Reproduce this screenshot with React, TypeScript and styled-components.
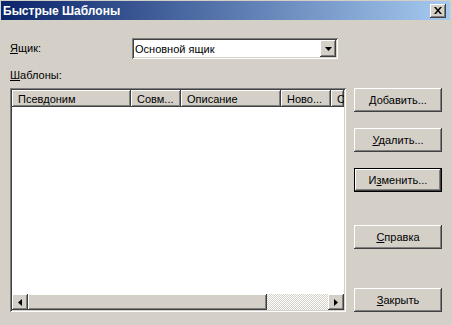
import React from "react";
import styled, { createGlobalStyle } from "styled-components";

const GlobalStyle = createGlobalStyle`
  html, body {
    margin: 0;
    padding: 0;
    background: #d4d0c8;
  }
  body {
    font-family: "Liberation Sans", Arial, sans-serif;
    font-size: 11px;
    color: #000;
  }
`;

const Window = styled.div`
  box-sizing: border-box;
  width: 452px;
  height: 325px;
  background: #d4d0c8;
  padding: 1px 2px 0 1px;
  display: flex;
  flex-direction: column;
`;

const TitleBar = styled.div`
  height: 19px;
  display: flex;
  align-items: center;
  justify-content: space-between;
  padding: 0 4px 0 2px;
  background: linear-gradient(to right, #0a246a, #a6caf0);
`;

const Title = styled.span`
  color: #fff;
  font-weight: bold;
  font-size: 12px;
`;

const CloseButton = styled.div`
  box-sizing: border-box;
  width: 16px;
  height: 14px;
  background: #d4d0c8;
  display: flex;
  align-items: center;
  justify-content: center;
  box-shadow: inset -1px -1px #404040, inset 1px 1px #fff,
    inset -2px -2px #808080;
`;

const Body = styled.div`
  display: flex;
  padding: 18px 0 0 9px;
`;

const LeftColumn = styled.div`
  width: 336px;
  display: flex;
  flex-direction: column;
`;

const FieldRow = styled.div`
  display: flex;
  align-items: center;
  height: 21px;
`;

const Label = styled.span<{ width?: number }>`
  width: ${({ width }) => (width ? `${width}px` : "auto")};
  line-height: 13px;
`;

const U = styled.span`
  text-decoration: underline;
`;

const Sunken = styled.div`
  box-sizing: border-box;
  background: #fff;
  box-shadow: inset 1px 1px #808080, inset -1px -1px #fff,
    inset 2px 2px #404040, inset -2px -2px #d4d0c8;
  padding: 2px;
`;

const Combo = styled(Sunken)`
  width: 206px;
  height: 21px;
  display: flex;
  align-items: center;
`;

const ComboText = styled.span`
  flex: 1;
  padding-left: 1px;
`;

const Raised = styled.div`
  box-sizing: border-box;
  background: #d4d0c8;
  box-shadow: inset -1px -1px #404040, inset 1px 1px #fff,
    inset -2px -2px #808080;
  display: flex;
  align-items: center;
  justify-content: center;
`;

const ComboButton = styled(Raised)`
  width: 16px;
  height: 17px;
`;

const SectionLabel = styled.div`
  margin-top: 10px;
  height: 19px;
  line-height: 13px;
`;

const List = styled(Sunken)`
  width: 336px;
  height: 224px;
  display: flex;
  flex-direction: column;
`;

const HeaderRow = styled.div`
  display: flex;
  height: 17px;
  overflow: hidden;
  flex-shrink: 0;
`;

const HeaderCell = styled(Raised)<{ width?: number }>`
  width: ${({ width }) => (width ? `${width}px` : "auto")};
  flex: ${({ width }) => (width ? "none" : "1")};
  justify-content: flex-start;
  padding-left: 6px;
  white-space: nowrap;
  overflow: hidden;
`;

const ListBody = styled.div`
  flex: 1;
`;

const HScroll = styled.div`
  display: flex;
  height: 16px;
`;

const ScrollButton = styled(Raised)`
  width: 16px;
  height: 16px;
`;

const Thumb = styled(Raised)`
  width: 239px;
  height: 16px;
`;

const Track = styled.div`
  flex: 1;
  background-color: #d4d0c8;
  background-image: repeating-conic-gradient(#ffffff 0 25%, #d4d0c8 0 50%);
  background-size: 2px 2px;
`;

const RightColumn = styled.div`
  margin-left: 8px;
  display: flex;
  flex-direction: column;
`;

const Button = styled(Raised)<{ top: number; isDefault?: boolean }>`
  width: 88px;
  height: 24px;
  margin-top: ${({ top }) => top}px;
  box-shadow: ${({ isDefault }) =>
    isDefault
      ? "inset 0 0 0 1px #000, inset -2px -2px #404040, inset 2px 2px #fff, inset -3px -3px #808080"
      : "inset -1px -1px #404040, inset 1px 1px #fff, inset -2px -2px #808080"};
`;

const Arrow = ({ dir }: { dir: "down" | "left" | "right" }) => {
  const points = {
    down: "0,0 7,0 3.5,4",
    left: "4,0 4,7 0,3.5",
    right: "0,0 0,7 4,3.5",
  }[dir];
  const size = dir === "down" ? { w: 7, h: 4 } : { w: 4, h: 7 };
  return (
    <svg width={size.w} height={size.h} viewBox={`0 0 ${size.w} ${size.h}`}>
      <polygon points={points} fill="#000" />
    </svg>
  );
};

export default function App() {
  return (
    <>
      <GlobalStyle />
      <Window>
        <TitleBar>
          <Title>Быстрые Шаблоны</Title>
          <CloseButton>
            <svg width="8" height="7" viewBox="0 0 8 7">
              <path d="M0 0h2l2 2.5 2-2.5h2l-3 3.5 3 3.5h-2l-2-2.5-2 2.5h-2l3-3.5z" fill="#000" />
            </svg>
          </CloseButton>
        </TitleBar>

        <Body>
          <LeftColumn>
            <FieldRow>
              <Label width={122}>
                <U>Я</U>щик:
              </Label>
              <Combo>
                <ComboText>Основной ящик</ComboText>
                <ComboButton>
                  <Arrow dir="down" />
                </ComboButton>
              </Combo>
            </FieldRow>

            <SectionLabel>
              <U>Ш</U>аблоны:
            </SectionLabel>

            <List>
              <HeaderRow>
                <HeaderCell width={119}>Псевдоним</HeaderCell>
                <HeaderCell width={50}>Совм...</HeaderCell>
                <HeaderCell width={100}>Описание</HeaderCell>
                <HeaderCell width={50}>Ново...</HeaderCell>
                <HeaderCell>С</HeaderCell>
              </HeaderRow>
              <ListBody />
              <HScroll>
                <ScrollButton>
                  <Arrow dir="left" />
                </ScrollButton>
                <Thumb />
                <Track />
                <ScrollButton>
                  <Arrow dir="right" />
                </ScrollButton>
              </HScroll>
            </List>
          </LeftColumn>

          <RightColumn>
            <Button top={50}>
              <span>
                <U>Д</U>обавить...
              </span>
            </Button>
            <Button top={16}>
              <span>
                <U>У</U>далить...
              </span>
            </Button>
            <Button top={16} isDefault>
              <span>
                И<U>з</U>менить...
              </span>
            </Button>
            <Button top={33}>
              <span>
                <U>С</U>правка
              </span>
            </Button>
            <Button top={39}>
              <span>
                <U>З</U>акрыть
              </span>
            </Button>
          </RightColumn>
        </Body>
      </Window>
    </>
  );
}
